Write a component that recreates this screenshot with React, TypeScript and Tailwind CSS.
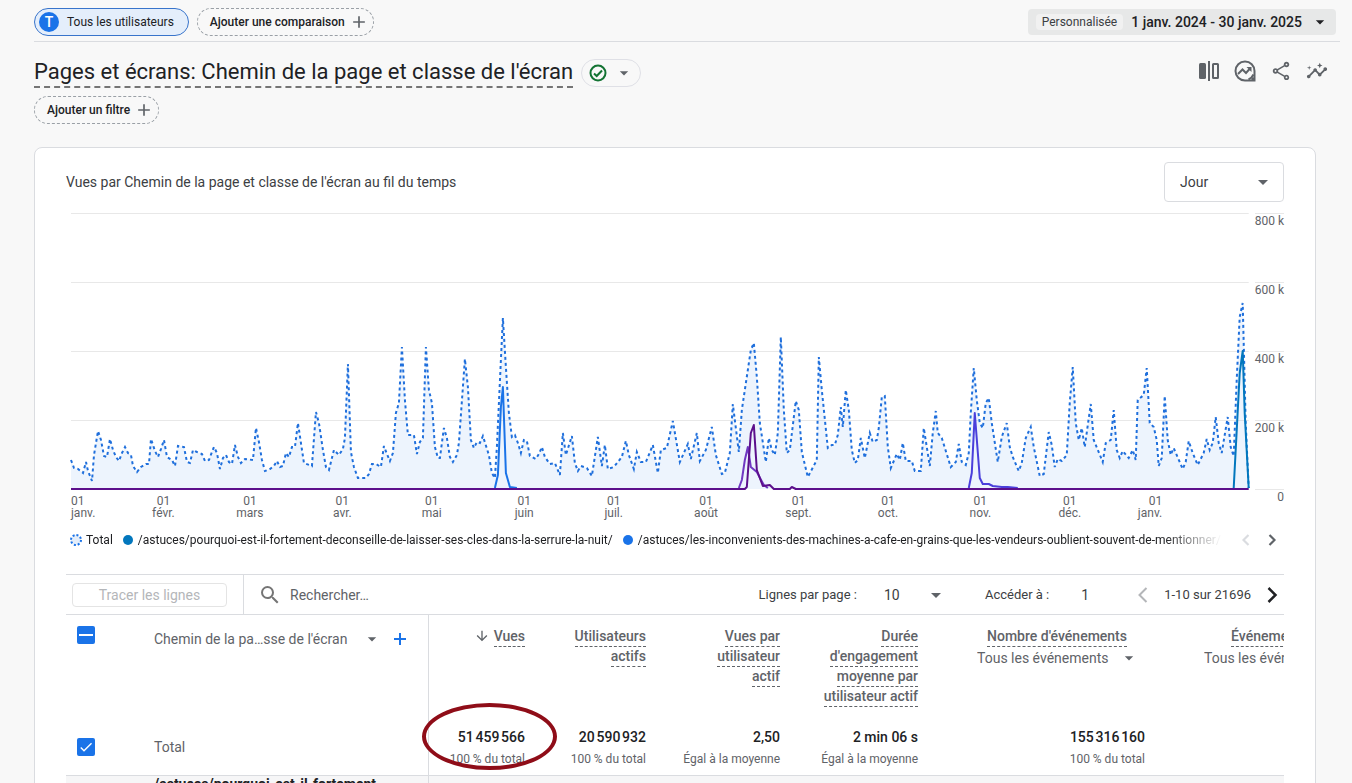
import { useState } from "react";
import type { ReactNode } from "react";
import {
  MdAdd,
  MdArrowDownward,
  MdArrowDropDown,
  MdCheck,
  MdInsights,
  MdOutlineShare,
  MdSearch,
} from "react-icons/md";

const TOTAL =
  "0,247 3,255 7,256 12,260 15,249 17,258 21,268 23,242 27,218 30,227 33,243 36,244 39,226 42,237 45,244 48,248 51,240 54,234 57,240 60,242 62,253 66,259 70,254 75,251 78,251 80,226 84,238 87,244 90,236 93,227 96,244 101,247 104,253 107,233 113,234 116,249 119,250 122,237 126,239 131,241 134,248 138,247 141,239 143,234 146,240 149,256 152,245 155,242 158,249 161,251 164,232 167,244 170,250 174,246 182,247 185,215 188,229 191,247 194,258 199,256 203,253 206,248 209,254 212,253 215,240 218,244 221,234 224,234 227,210 230,230 233,250 241,253 245,199 248,210 252,237 255,254 258,257 263,237 266,240 268,242 272,236 274,225 277,151 280,239 283,254 287,265 295,265 298,261 301,251 305,251 310,254 313,233 316,241 319,248 322,240 325,200 328,190 331,134 334,187 337,222 343,222 346,241 349,229 352,225 355,134 358,177 361,190 364,234 367,245 369,245 373,215 376,225 379,244 382,249 386,242 388,230 394,146 397,174 400,227 403,235 406,229 409,230 412,223 418,242 421,260 424,265 426,234 430,147 432,105 435,154 438,200 441,224 444,222 447,230 450,240 453,227 456,228 459,243 465,246 468,241 471,234 474,244 479,251 484,250 489,262 492,220 495,242 501,223 504,250 507,258 510,253 516,255 521,263 527,224 531,253 534,232 537,256 543,254 551,244 555,228 558,242 563,256 566,239 570,249 575,249 582,232 587,260 590,237 596,235 602,208 609,249 617,231 620,246 626,220 629,248 635,237 641,214 645,242 651,261 654,260 659,240 662,191 668,239 671,197 680,137 683,130 686,164 689,210 695,249 698,225 701,237 704,242 707,220 710,124 713,197 716,240 719,237 725,188 728,197 731,239 737,264 746,247 748,144 751,177 757,235 761,232 764,232 767,222 770,194 772,214 775,177 778,197 781,237 784,250 787,247 790,225 794,245 799,220 802,229 806,227 808,215 811,184 814,183 817,234 820,255 826,241 829,247 832,230 835,248 841,248 844,258 850,258 853,215 859,253 862,220 865,198 867,220 871,225 880,254 885,249 888,231 891,249 895,252 898,240 900,200 903,155 906,187 909,210 912,215 915,190 918,185 921,210 927,249 931,224 936,210 939,234 942,244 948,258 951,250 955,225 960,214 963,234 969,263 973,261 975,244 978,219 981,232 984,254 987,246 991,248 996,242 999,190 1002,154 1005,210 1008,227 1011,215 1014,234 1020,191 1023,227 1032,249 1035,230 1040,227 1043,197 1046,237 1049,245 1052,238 1058,245 1062,237 1065,247 1067,187 1073,182 1076,155 1079,210 1083,214 1086,227 1088,253 1091,245 1094,183 1097,227 1100,242 1103,235 1112,256 1115,249 1118,228 1122,240 1127,252 1133,240 1136,226 1139,237 1142,230 1145,204 1148,230 1151,240 1157,204 1160,234 1163,243 1166,167 1169,104 1172,90 1175,210 1178,275";

const SERIES = [
  { color: "#0277bd", points: "1163,275 1169,160 1172,138 1174,200 1178,275" },
  { color: "#1a73e8", points: "424,275 427,262 430,194 432,174 435,260 439,274 446,275" },
  {
    color: "#4a3fdb",
    points: "898,275 901,260 904,200 909,265 912,271 918,271 922,273 931,274 937,274 947,275",
  },
  { color: "#7038c2", points: "668,275 671,267 674,247 677,234 680,254 686,259 693,272 697,275" },
  {
    color: "#5c0f8b",
    points:
      "0,276 674,276 676,274 680,220 683,212 686,257 692,273 699,272 703,276 719,276 721,274 725,276 1178,276",
  },
];

const MONTHS = [
  { name: "janv.", days: 31 },
  { name: "févr.", days: 29 },
  { name: "mars", days: 31 },
  { name: "avr.", days: 30 },
  { name: "mai", days: 31 },
  { name: "juin", days: 30 },
  { name: "juil.", days: 31 },
  { name: "août", days: 31 },
  { name: "sept.", days: 30 },
  { name: "oct.", days: 31 },
  { name: "nov.", days: 30 },
  { name: "déc.", days: 31 },
  { name: "janv.", days: 29 },
];

const SCALE = ["800 k", "600 k", "400 k", "200 k"];

function CompareIcon() {
  return (
    <svg viewBox="0 0 22 22" className="size-[22px]" fill="none" stroke="currentColor" strokeWidth="2">
      <rect x="1" y="3" width="7" height="16" rx="1.5" fill="currentColor" stroke="none" />
      <path d="M11 1v20" />
      <rect x="15" y="4" width="5" height="14" rx="0.5" />
    </svg>
  );
}

function ExploreIcon() {
  return (
    <svg viewBox="0 0 22 22" className="size-[22px]" fill="none" stroke="currentColor" strokeWidth="2">
      <path d="M20.5 11a9.5 9.5 0 1 0-9.500 9.500" />
      <path d="M20.500 11v9.500H11" />
      <path d="M18 18l2 2" strokeWidth="3" />
      <path d="M19.500 14.500a9.500 9.500 0 0 1-5 5" />
      <path d="M4 14l4.500-4.500 3.500 3.500 4-4.500" />
      <path d="M12.500 7h5v5z" fill="currentColor" stroke="none" />
    </svg>
  );
}

function CheckCircleIcon() {
  return (
    <svg viewBox="0 0 20 20" className="size-5" fill="none" stroke="currentColor" strokeWidth="2">
      <circle cx="10" cy="10" r="7.5" />
      <path d="M6 10.500l2.700 2.500 5.300-5.500" />
    </svg>
  );
}

function PlusIcon({ className }: { className: string }) {
  return (
    <svg viewBox="0 0 20 20" className={className} stroke="currentColor" strokeWidth="2">
      <path d="M10 4v12M4 10h12" />
    </svg>
  );
}

function Chevron({ flip = false, className }: { flip?: boolean; className: string }) {
  return (
    <svg viewBox="0 0 28 28" className={className} fill="none" stroke="currentColor">
      <path d={flip ? "M17.500 7l-7 7 7 7" : "M10.500 7l7 7-7 7"} />
    </svg>
  );
}

function Checkbox({ label, partial = false }: { label: string; partial?: boolean }) {
  const [on, setOn] = useState(true);
  return (
    <label className="grid size-[18px] place-items-center">
      <input
        type="checkbox"
        aria-label={label}
        checked={on}
        onChange={() => setOn(!on)}
        className="size-[18px] appearance-none rounded-xs border-2 border-[#1a73e8] [grid-area:1/1] checked:bg-[#1a73e8]"
      />
      {on && (
        <span className="pointer-events-none text-white [grid-area:1/1]">
          {partial ? (
            <svg viewBox="0 0 18 18" className="size-[18px]" stroke="currentColor" strokeWidth="2">
              <path d="M2 9h14" />
            </svg>
          ) : (
            <MdCheck className="size-4" />
          )}
        </span>
      )}
    </label>
  );
}

function Picker({
  label,
  options,
  className,
  caret,
}: {
  label: string;
  options: string[];
  className: string;
  caret: string;
}) {
  return (
    <span className="inline-grid items-center">
      <select aria-label={label} className={`appearance-none bg-transparent [grid-area:1/1] ${className}`}>
        {options.map((o) => (
          <option key={o}>{o}</option>
        ))}
      </select>
      <MdArrowDropDown
        className={`pointer-events-none justify-self-end text-[#5f6368] [grid-area:1/1] ${caret}`}
      />
    </span>
  );
}

function Metric({ children }: { children: ReactNode }) {
  return <span className="border-b border-dashed border-[#5f6368] box-decoration-clone pb-0.5">{children}</span>;
}

function Chart() {
  return (
    <div className="mt-[11px] ml-[5px] flex gap-1.5 text-xs text-[#5f6368]">
      <div className="min-w-0 flex-1">
        <svg
          viewBox="0 0 1178 276"
          preserveAspectRatio="none"
          className="block h-[276px] w-full overflow-visible"
          fill="none"
          role="img"
          aria-label="Vues au fil du temps"
        >
          {[0, 69, 138, 207].map((y) => (
            <path key={y} d={`M0 ${y + 0.5}H1178`} stroke="#e8e8e8" vectorEffect="non-scaling-stroke" />
          ))}
          <polygon points={`0,276 ${TOTAL} 1178,276`} fill="#1a73e8" fillOpacity="0.08" />
          <polyline
            points={TOTAL}
            stroke="#1f6fdc"
            strokeWidth="2"
            strokeDasharray="3 3"
            vectorEffect="non-scaling-stroke"
          />
          {SERIES.map((s) => (
            <polyline
              key={s.color}
              points={s.points}
              stroke={s.color}
              strokeWidth="2"
              strokeLinejoin="round"
              vectorEffect="non-scaling-stroke"
            />
          ))}
        </svg>
        <div className="flex pt-1.5 leading-3">
          {MONTHS.map((m, i) => (
            <div key={i} className="min-w-0 basis-0" style={{ flexGrow: m.days }}>
              <div
                className={
                  i === 0
                    ? "flex w-0 justify-start"
                    : i === MONTHS.length - 1
                      ? "flex w-0 justify-end"
                      : "flex w-0 justify-center"
                }
              >
                <span className={i === 0 ? "" : i === MONTHS.length - 1 ? "text-right" : "text-center"}>
                  01
                  <br />
                  {m.name}
                </span>
              </div>
            </div>
          ))}
        </div>
      </div>
      <div className="text-right leading-[14px]">
        {SCALE.map((s) => (
          <div key={s} className="h-[69px] border-t border-[#e8e8e8] whitespace-nowrap">
            {s}
          </div>
        ))}
        <div className="border-t border-[#e8e8e8]">0</div>
      </div>
    </div>
  );
}

function Legend() {
  return (
    <div className="mt-[11px] flex items-center pl-1 text-xs text-[#202124]">
      <ul className="flex min-w-0 flex-1 gap-2.5 overflow-hidden whitespace-nowrap [mask-image:linear-gradient(to_right,black_95%,transparent)]">
        <li className="flex items-center gap-1">
          <svg viewBox="0 0 12 12" className="size-3 shrink-0">
            <circle cx="6" cy="6" r="5" fill="#e4edf9" stroke="#1a73e8" strokeWidth="2" strokeDasharray="2 1.900" />
          </svg>
          Total
        </li>
        <li className="flex items-center gap-[5px]">
          <span className="size-2.5 shrink-0 rounded-full bg-[#0277bd]" />
          /astuces/pourquoi-est-il-fortement-deconseille-de-laisser-ses-cles-dans-la-serrure-la-nuit/
        </li>
        <li className="flex items-center gap-[5px]">
          <span className="size-2.5 shrink-0 rounded-full bg-[#1a73e8]" />
          /astuces/les-inconvenients-des-machines-a-cafe-en-grains-que-les-vendeurs-oublient-souvent-de-mentionner/
        </li>
      </ul>
      <div className="flex gap-1.5 pr-0.5 pl-3.5 text-[#5f6368]">
        <button type="button" aria-label="Légende précédente" disabled className="text-[#dadce0]">
          <Chevron flip className="size-5 stroke-3" />
        </button>
        <button type="button" aria-label="Légende suivante">
          <Chevron className="size-5 stroke-3" />
        </button>
      </div>
    </div>
  );
}

function Toolbar() {
  return (
    <div className="mt-6 flex h-[41px] items-center border-y border-[#dadce0] text-[13px] text-[#3c4043]">
      <div className="flex h-full w-[178px] shrink-0 items-center border-r border-[#dadce0] pl-1.5">
        <button
          type="button"
          disabled
          className="h-6 w-[155px] rounded-sm border border-[#e4e4e4] text-sm text-[#b4b6b9]"
        >
          Tracer les lignes
        </button>
      </div>
      <label className="flex min-w-0 flex-1 items-center gap-2 pl-3.5">
        <MdSearch className="size-6 shrink-0 text-[#757575]" />
        <input
          type="search"
          aria-label="Rechercher"
          placeholder="Rechercher…"
          className="min-w-0 flex-1 bg-transparent text-sm outline-none placeholder:text-[#5f6368]"
        />
      </label>
      <label htmlFor="rows">Lignes par page :</label>
      <span className="ml-[27px] inline-grid items-center">
        <select id="rows" className="w-16 appearance-none bg-transparent text-sm [grid-area:1/1]">
          <option>10</option>
          <option>25</option>
          <option>50</option>
        </select>
        <MdArrowDropDown className="pointer-events-none size-6 justify-self-end text-[#5f6368] [grid-area:1/1]" />
      </span>
      <label htmlFor="goto" className="ml-[37px]">
        Accéder à :
      </label>
      <input id="goto" defaultValue="1" className="ml-5 w-[60px] bg-transparent pl-3 text-sm outline-none" />
      <div className="-mr-0.5 flex items-center gap-[7px]">
        <button type="button" aria-label="Page précédente" disabled className="text-[#b4b6b9]">
          <Chevron flip className="size-7 stroke-2" />
        </button>
        <span className="whitespace-nowrap">1-10 sur 21696</span>
        <button type="button" aria-label="Page suivante" className="text-[#202124]">
          <Chevron className="size-7 stroke-[2.5]" />
        </button>
      </div>
    </div>
  );
}

function Figure({ value, note }: { value: string; note: string }) {
  return (
    <div className="pt-0.5 text-right">
      <div className="text-sm leading-[22px] font-medium text-[#202124]">{value}</div>
      <div className="text-xs leading-[22px] text-[#5f6368]">{note}</div>
    </div>
  );
}

function EventHead({ title }: { title: string }) {
  return (
    <div className="inline-flex flex-col items-center">
      <div>
        <Metric>{title}</Metric>
      </div>
      <Picker
        label={`${title} : filtre`}
        options={["Tous les événements"]}
        className="h-6 pr-7 text-sm font-normal text-[#5f6368]"
        caret="size-5 -mr-0.5"
      />
    </div>
  );
}

function DataTable() {
  return (
    <div className="overflow-hidden">
      <table className="w-full min-w-[1314px] table-fixed border-collapse text-sm leading-5 text-[#5f6368]">
        <colgroup>
          <col className="w-[88px]" />
          <col className="w-[274px]" />
          <col className="w-[105px]" />
          <col className="w-[121px]" />
          <col className="w-[134px]" />
          <col className="w-[138px]" />
          <col className="w-[227px]" />
          <col className="w-[227px]" />
        </colgroup>
        <thead>
          <tr className="h-[105px] text-right align-top [&>th]:pt-[11px] [&>th]:font-medium">
            <th className="pl-[11px]">
              <Checkbox label="Tout sélectionner" partial />
            </th>
            <th className="border-r border-[#dadce0]">
              <div className="flex items-center pt-px">
                <Picker
                  label="Dimension principale"
                  options={["Chemin de la pa…sse de l'écran"]}
                  className="h-6 pr-8 text-sm font-normal text-[#5f6368]"
                  caret="size-5 -mr-0.5"
                />
                <button type="button" aria-label="Ajouter une dimension" className="ml-2.5 text-[#1a73e8]">
                  <PlusIcon className="size-5" />
                </button>
              </div>
            </th>
            <th className="pr-2">
              <MdArrowDownward className="mr-1 inline size-4 align-text-bottom" />
              <Metric>Vues</Metric>
            </th>
            <th className="pr-2 pl-8">
              <Metric>Utilisateurs actifs</Metric>
            </th>
            <th className="pr-2 pl-14">
              <Metric>Vues par utilisateur actif</Metric>
            </th>
            <th className="pr-2 pl-6">
              <Metric>Durée d'engagement moyenne par utilisateur actif</Metric>
            </th>
            <th className="pr-4">
              <EventHead title="Nombre d'événements" />
            </th>
            <th className="pr-4">
              <EventHead title="Événements clés" />
            </th>
          </tr>
        </thead>
        <tbody>
          <tr className="h-[55px] border-b border-[#dadce0] [&>td]:pr-2">
            <td className="pl-[11px]">
              <Checkbox label="Total" />
            </td>
            <td className="border-r border-[#dadce0]">Total</td>
            <td className="relative">
              <Figure value={"51\u202f459\u202f566"} note="100 % du total" />
              <span className="pointer-events-none absolute -top-[17px] -left-[7px] z-10 h-[67px] w-[135px] rounded-[50%] border-4 border-[#8f0d18]" />
            </td>
            <td>
              <Figure value={"20\u202f590\u202f932"} note="100 % du total" />
            </td>
            <td>
              <Figure value="2,50" note="Égal à la moyenne" />
            </td>
            <td>
              <Figure value="2 min 06 s" note="Égal à la moyenne" />
            </td>
            <td>
              <Figure value={"155\u202f316\u202f160"} note="100 % du total" />
            </td>
            <td />
          </tr>
          <tr className="h-14 bg-[#f6f6f7] align-top">
            <td />
            <td className="border-r border-[#dadce0] text-sm leading-4 font-bold text-[#202124]">
              /astuces/pourquoi-est-il-fortement
            </td>
            <td colSpan={6} />
          </tr>
        </tbody>
      </table>
    </div>
  );
}

export default function App() {
  return (
    <div className="h-screen overflow-hidden bg-[#f8f8f8] pl-[34px] font-[Roboto,sans-serif] text-[#202124]">
      <header className="mr-3 flex items-center gap-2 border-b border-[#dadce0] pt-2 pr-1 pb-[5px]">
        <button
          type="button"
          className="flex h-7 items-center gap-2 rounded-full border border-[#3874cb] bg-[#e4eefb] pr-3.5 pl-1 text-xs"
        >
          <span className="grid size-5 place-items-center rounded-full bg-[#1a73e8] text-sm font-medium text-white">
            T
          </span>
          Tous les utilisateurs
        </button>
        <button
          type="button"
          className="flex h-7 items-center gap-1 rounded-full border border-dashed border-[#9aa0a6] pr-1 pl-3 text-xs font-medium"
        >
          Ajouter une comparaison
          <MdAdd className="size-5 text-[#5f6368]" />
        </button>
        <button
          type="button"
          className="ml-auto flex h-[26px] items-center rounded-sm bg-[#e7e8e8] pr-1.5 pl-2 text-sm font-medium"
        >
          <span className="mr-2 rounded-sm bg-[#f1f1f1] px-1.5 text-xs leading-4 font-normal text-[#3c4043]">
            Personnalisée
          </span>
          1 janv. 2024 - 30 janv. 2025
          <MdArrowDropDown className="ml-2 size-5" />
        </button>
      </header>

      <div className="mr-6 flex items-center pt-4">
        <h1 className="border-b-2 border-dashed border-[#757575] text-[22px] leading-7">
          Pages et écrans: Chemin de la page et classe de l'écran
        </h1>
        <button
          type="button"
          aria-label="État des données"
          className="ml-2 flex h-7 items-center gap-1.5 rounded-full border border-[#dfe0e6] pr-1.5 pl-1.5"
        >
          <span className="text-[#137333]">
            <CheckCircleIcon />
          </span>
          <MdArrowDropDown className="size-5 text-[#5f6368]" />
        </button>
        <div className="ml-auto flex items-center gap-3.5 pb-1 text-[#5f6368]">
          <button type="button" aria-label="Comparer">
            <CompareIcon />
          </button>
          <button type="button" aria-label="Explorer">
            <ExploreIcon />
          </button>
          <button type="button" aria-label="Partager">
            <MdOutlineShare className="size-[22px]" />
          </button>
          <button type="button" aria-label="Insights">
            <MdInsights className="size-[22px]" />
          </button>
        </div>
      </div>

      <button
        type="button"
        className="mt-2 flex h-7 items-center gap-1 rounded-full border border-dashed border-[#9aa0a6] pr-1 pl-3 text-xs font-medium"
      >
        Ajouter un filtre
        <MdAdd className="size-5 text-[#5f6368]" />
      </button>

      <main className="mt-[23px] mr-9 rounded-lg border border-[#dadce0] bg-white px-[31px] pt-3.5">
        <div className="flex items-center justify-between">
          <h2 className="text-sm text-[#3c4043]">
            Vues par Chemin de la page et classe de l'écran au fil du temps
          </h2>
          <Picker
            label="Granularité"
            options={["Jour", "Semaine", "Mois"]}
            className="h-10 w-[120px] rounded-sm border border-[#dadce0] pl-[15px] text-sm text-[#3c4043]"
            caret="mr-[9px] size-6"
          />
        </div>
        <Chart />
        <Legend />
        <Toolbar />
        <DataTable />
      </main>
    </div>
  );
}
